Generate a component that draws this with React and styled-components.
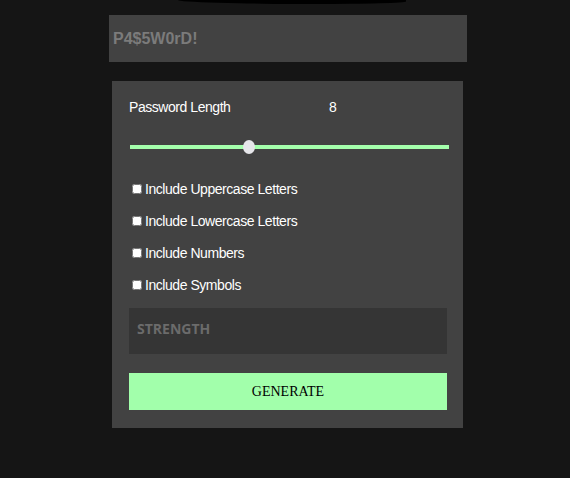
import React, { useState } from 'react';
import styled, { createGlobalStyle } from 'styled-components';

const GlobalStyle = createGlobalStyle`
    html, body {
        margin: 0;
        padding: 0;
        background: #151515;
        height: 100%;
    }
    body {
        font-family: "Liberation Sans", Arial, sans-serif;
    }
`;

const Page = styled.div`
    width: 570px;
    height: 478px;
    display: flex;
    flex-direction: column;
    align-items: flex-start;
    overflow: hidden;
`;

const HeadingShadow = styled.div`
    margin-left: 178px;
    width: 228px;
    height: 4px;
    background: #000;
    border-radius: 0 0 40% 60% / 0 0 60% 100%;
`;

const Output = styled.div`
    margin: 11px 0 0 109px;
    width: 358px;
    height: 47px;
    box-sizing: border-box;
    background: #424242;
    display: flex;
    align-items: center;
    padding-left: 4px;
    font-size: 16px;
    font-weight: bold;
    color: #7b7b7b;
`;

const Panel = styled.div`
    margin: 19px 0 0 112px;
    width: 351px;
    box-sizing: border-box;
    background: #424242;
    padding: 18px 16px 18px 17px;
    display: flex;
    flex-direction: column;
`;

const LengthRow = styled.div`
    display: grid;
    grid-template-columns: 200px auto;
    font-size: 14px;
    letter-spacing: -0.45px;
    line-height: 17px;
    color: #fff;
`;

const Range = styled.input`
    -webkit-appearance: none;
    appearance: none;
    margin: 23px 0 0 1px;
    width: 319px;
    height: 16px;
    background: transparent;
    &::-webkit-slider-runnable-track {
        height: 4px;
        background: #a4ffac;
    }
    &::-webkit-slider-thumb {
        -webkit-appearance: none;
        width: 12px;
        height: 14px;
        margin-top: -5px;
        border-radius: 50%;
        background: #e6e6ea;
    }
`;

const Options = styled.div`
    margin-top: 18px;
    display: flex;
    flex-direction: column;
`;

const Option = styled.label`
    height: 32px;
    display: flex;
    align-items: center;
    font-size: 14px;
    letter-spacing: -0.45px;
    color: #fff;
    input {
        margin: 0 3px 0 3px;
        width: 10px;
        height: 10px;
    }
`;

const Strength = styled.div`
    margin-top: 7px;
    height: 46px;
    box-sizing: border-box;
    background: #353535;
    display: flex;
    align-items: center;
    padding: 0 0 6px 8px;
    font-family: "Open Sans", sans-serif;
    font-weight: bold;
    font-size: 14px;
    color: #6b6b6b;
`;

const Generate = styled.button`
    margin-top: 19px;
    height: 37px;
    border: 0;
    background: #a2ffab;
    font-family: "Liberation Serif", "Times New Roman", serif;
    font-size: 14px;
    color: #000;
    cursor: pointer;
`;

const options = [
    'Include Uppercase Letters',
    'Include Lowercase Letters',
    'Include Numbers',
    'Include Symbols',
];

const App = () => {
    const [length, setLength] = useState(8);

    return (
        <>
            <GlobalStyle />
            <Page>
                <HeadingShadow />
                <Output>P4$5W0rD!</Output>
                <Panel>
                    <LengthRow>
                        <span>Password Length</span>
                        <span>{length}</span>
                    </LengthRow>
                    <Range
                        type="range"
                        min="1"
                        max="20"
                        value={length}
                        onChange={e => setLength(e.target.value)}
                    />
                    <Options>
                        {options.map(label => (
                            <Option key={label}>
                                <input type="checkbox" />
                                {label}
                            </Option>
                        ))}
                    </Options>
                    <Strength>STRENGTH</Strength>
                    <Generate>GENERATE</Generate>
                </Panel>
            </Page>
        </>
    );
};

export default App;
